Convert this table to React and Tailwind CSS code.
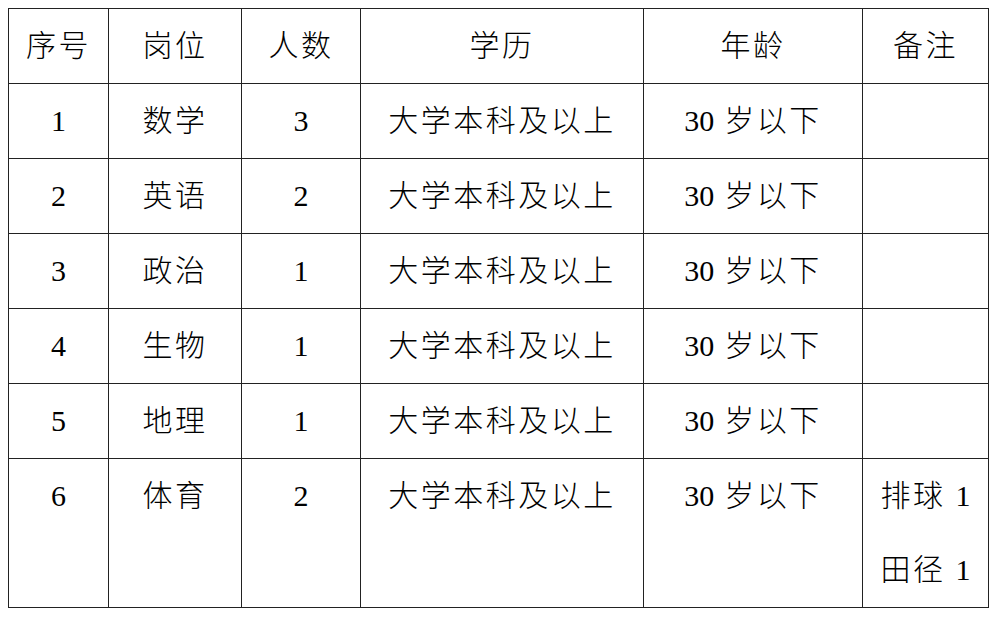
const rows = [
  ["1", "数学", "3"],
  ["2", "英语", "2"],
  ["3", "政治", "1"],
  ["4", "生物", "1"],
  ["5", "地理", "1"],
]

const cell = "border border-[#222] p-0 text-center align-top font-light leading-[74px]"

function Num({ children }) {
  return <span className="font-['Liberation_Serif'] font-normal tracking-normal">{children}</span>
}

function Age() {
  return (
    <>
      <Num>30</Num> 岁以下
    </>
  )
}

export default function App() {
  return (
    <div
      className="min-h-screen bg-white pl-[8px] pt-[8px] text-[30px] tracking-[2.5px] text-black"
      style={{ fontFamily: '"Liberation Serif", "Noto Sans CJK SC", serif' }}
    >
      <table className="table-fixed border-collapse">
        <colgroup>
          <col className="w-[100px]" />
          <col className="w-[133px]" />
          <col className="w-[119px]" />
          <col className="w-[283px]" />
          <col className="w-[219px]" />
          <col className="w-[126px]" />
        </colgroup>
        <thead>
          <tr className="h-[74px]">
            <th className={cell}>序号</th>
            <th className={cell}>岗位</th>
            <th className={cell}>人数</th>
            <th className={cell}>学历</th>
            <th className={cell}>年龄</th>
            <th className={cell}>备注</th>
          </tr>
        </thead>
        <tbody>
          {rows.map(([n, post, count]) => (
            <tr key={n} className="h-[74px]">
              <td className={cell}><Num>{n}</Num></td>
              <td className={cell}>{post}</td>
              <td className={cell}><Num>{count}</Num></td>
              <td className={cell}>大学本科及以上</td>
              <td className={cell}><Age /></td>
              <td className={cell}></td>
            </tr>
          ))}
          <tr className="h-[147px]">
            <td className={cell}><Num>6</Num></td>
            <td className={cell}>体育</td>
            <td className={cell}><Num>2</Num></td>
            <td className={cell}>大学本科及以上</td>
            <td className={cell}><Age /></td>
            <td className={`${cell} leading-[73px]`}>
              <div>排球 <Num>1</Num></div>
              <div>田径 <Num>1</Num></div>
            </td>
          </tr>
        </tbody>
      </table>
    </div>
  )
}
